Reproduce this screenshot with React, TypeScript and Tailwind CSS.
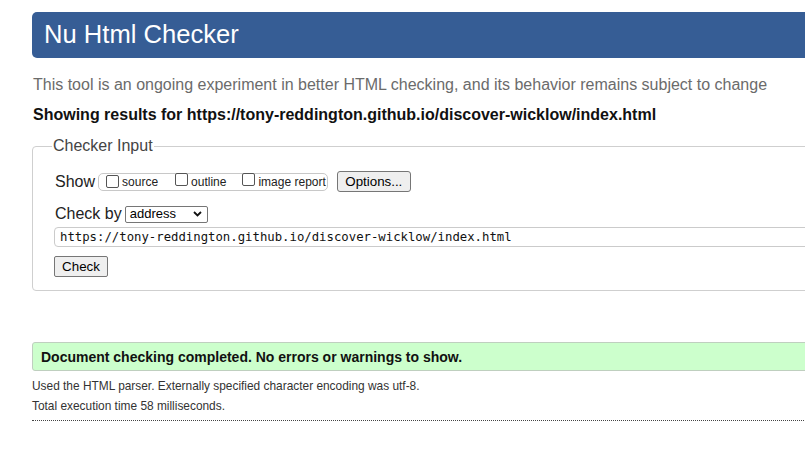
import React from "react";

function Checkbox() {
  return <span className="inline-block w-[13px] h-[13px] border border-[#555] rounded-[2px] bg-white shrink-0" />;
}

export default function App() {
  return (
    <div className="w-[805px] h-[470px] overflow-hidden bg-white font-['Liberation_Sans',Arial,sans-serif] text-[#222]">
      <div className="pl-[32px] w-[840px]">
        <div className="mt-[12px] h-[46px] rounded-[5px] bg-[#365d95] text-white text-[25.6px] pl-[12px] flex items-center leading-none">
          Nu Html Checker
        </div>
        <p className="mt-[18px] ml-[1px] text-[16px] leading-[18px] text-[#6b6b6b]">
          This tool is an ongoing experiment in better HTML checking, and its behavior remains subject to change
        </p>
        <p className="mt-[12px] ml-[1px] text-[16px] leading-[18px] font-bold text-[#111]">
          Showing results for https://tony-reddington.github.io/discover-wicklow/index.html
        </p>
        <fieldset className="mt-[13px] w-[800px] border border-[#cfcfcf] rounded-[4px] pl-[21px] pb-[13px]">
          <legend className="ml-[-2px] px-[1px] text-[16px] leading-[18px] text-[#444]">Checker Input</legend>
          <div className="mt-[16px] flex items-center h-[21px]">
            <span className="text-[16px] leading-[18px] ml-[1px] text-[#222]">Show</span>
            <div className="ml-[3px] h-[18px] border border-[#c8c8c8] rounded-[5px] flex items-center pl-[7px] pr-[1px] text-[12px] text-[#222]">
              <Checkbox />
              <span className="ml-[3px]">source</span>
              <span className="ml-[17px]"><Checkbox /></span>
              <span className="ml-[3px]">outline</span>
              <span className="ml-[16px]"><Checkbox /></span>
              <span className="ml-[3px]">image report</span>
            </div>
            <div className="ml-[9px] w-[74px] h-[21px] border border-[#767676] rounded-[3px] bg-[#efefef] text-[13.33px] text-black flex items-center justify-center">
              Options...
            </div>
          </div>
          <div className="mt-[13px] flex items-center h-[18px]">
            <span className="text-[16px] leading-[18px] ml-[1px] text-[#222]">Check by</span>
            <div className="ml-[3px] w-[83px] h-[17px] border border-[#767676] rounded-[2px] bg-white flex items-center pl-[4px] pr-[4px] text-[13px] text-black">
              <span className="flex-1">address</span>
              <svg width="9" height="6" viewBox="0 0 9 6" className="mr-[1px]">
                <path d="M1 1 L4.5 4.5 L8 1" fill="none" stroke="#111" strokeWidth="1.8" />
              </svg>
            </div>
          </div>
          <div className="mt-[4px] w-[780px] h-[20px] border border-[#cbcbcb] rounded-[4px] flex items-center pl-[5px] font-['DejaVu_Sans_Mono','Liberation_Mono',monospace] text-[12.3px] text-[#111]">
            https://tony-reddington.github.io/discover-wicklow/index.html
          </div>
          <div className="mt-[9px] w-[54px] h-[21px] border border-[#767676] rounded-[2px] bg-[#efefef] text-[13.33px] text-black flex items-center justify-center">
            Check
          </div>
        </fieldset>
        <div className="mt-[51px] w-[800px] h-[29px] bg-[#ccffcc] border border-[#bfcfbf] rounded-[3px] flex items-center pl-[8px] text-[14px] leading-[18px] font-bold text-[#111]">
          Document checking completed. No errors or warnings to show.
        </div>
        <p className="mt-[5px] text-[11.9px] leading-[20px] text-[#333]">
          Used the HTML parser. Externally specified character encoding was utf-8.
        </p>
        <p className="text-[11.9px] leading-[20px] text-[#333]">Total execution time 58 milliseconds.</p>
        <div className="mt-[4px] w-[800px] border-t border-dotted border-[#444]" />
      </div>
    </div>
  );
}
